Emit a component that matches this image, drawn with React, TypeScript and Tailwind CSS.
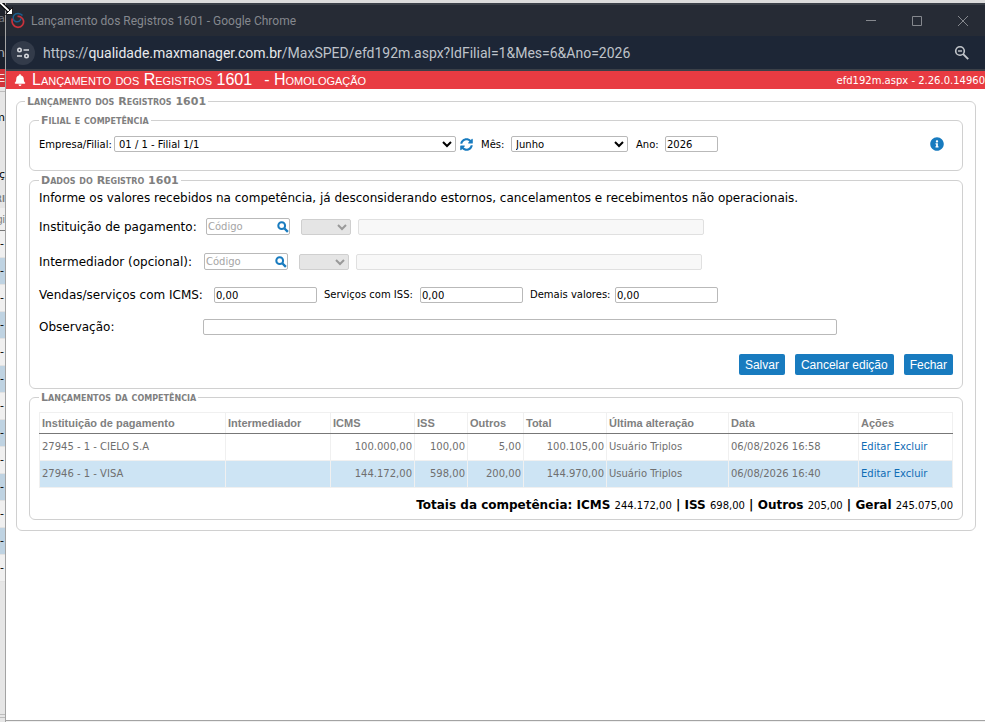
import React from 'react';
import { FaBell, FaInfoCircle, FaSyncAlt } from 'react-icons/fa';

const entries = [
  {
    institution: '27945 - 1 - CIELO S.A',
    icms: '100.000,00',
    iss: '100,00',
    others: '5,00',
    total: '100.105,00',
    user: 'Usuário Triplos',
    date: '06/08/2026 16:58',
  },
  {
    institution: '27946 - 1 - VISA',
    icms: '144.172,00',
    iss: '598,00',
    others: '200,00',
    total: '144.970,00',
    user: 'Usuário Triplos',
    date: '06/08/2026 16:40',
  },
];

const totals = [
  { label: 'ICMS', value: '244.172,00' },
  { label: 'ISS', value: '698,00' },
  { label: 'Outros', value: '205,00' },
  { label: 'Geral', value: '245.075,00' },
];

const backgroundRows = Array.from({ length: 13 }, (_, i) => i);

const controlClass = 'h-4 rounded-xs border border-[#b9b9b9] bg-white text-[10px] leading-3 text-black';
const inputClass = `${controlClass} px-px`;
const fieldsetClass = 'min-w-0 rounded-md border border-[#d0d0d0]';
const legendClass = 'px-0.5 text-[11px] font-bold leading-[13px] text-[#808080] [font-variant:small-caps]';
const buttonClass =
  "h-[21px] rounded-xs bg-[#187bbf] px-1.5 font-['Liberation_Sans',sans-serif] text-xs leading-4 text-white";

function FaviconIcon() {
  return (
    <svg width="14" height="17" viewBox="0 0 14 17" fill="none" aria-hidden="true">
      <path d="M11.5 3.5C9.5 1 5 .8 3 3.2 1.5 5.2 2 8.5 4.5 9.5c2.8 1 5.5-.8 5.5-3.2" stroke="#1c5f8d" strokeWidth="1.5" />
      <path d="M1.3 6.5C.2 10.5 2.5 15.3 7 15.3c4.200 0 6-3.800 5.500-6.600C12 6 9 4 6.500 4.500" stroke="#c8323c" strokeWidth="1.7" />
    </svg>
  );
}

function SiteSettingsIcon() {
  return (
    <svg width="14" height="14" viewBox="0 0 14 14" fill="none" stroke="#d5d7dc" strokeWidth="1.6" aria-hidden="true">
      <circle cx="3.5" cy="4" r="1.7" />
      <path d="M7.5 4H13M1 10h5" />
      <circle cx="10.5" cy="10" r="1.7" />
    </svg>
  );
}

function ZoomOutIcon() {
  return (
    <svg width="16" height="16" viewBox="0 0 16 16" fill="none" stroke="#c3c6cb" aria-hidden="true">
      <circle cx="6" cy="6" r="4.3" strokeWidth="1.6" />
      <path d="M4 6h4" strokeWidth="1.4" />
      <path d="M9.2 9.2l5 5" strokeWidth="1.9" />
    </svg>
  );
}

function SearchIcon() {
  return (
    <svg width="12" height="12" viewBox="0 0 12 12" fill="none" stroke="#187bbf" aria-hidden="true">
      <circle cx="4.7" cy="4.7" r="3.4" strokeWidth="2" />
      <path d="M7.5 7.5l3.4 3.4" strokeWidth="2.4" />
    </svg>
  );
}

function BackgroundWindow() {
  return (
    <div
      aria-hidden="true"
      className="flex w-1.5 shrink-0 flex-col overflow-hidden border-r border-[#a3a3a3] bg-[#e6e6e6] text-[11px] whitespace-nowrap text-black"
    >
      <div className="flex h-[33px] items-center justify-end bg-[#20242c] text-[#777a80]">ra</div>
      <div className="flex h-[33px] items-center justify-end bg-[#1a202c] text-[13px] text-[#aaaeb5]">n</div>
      <div className="flex h-[18px] items-center justify-end bg-[#d0343b] font-['Liberation_Sans',sans-serif] text-white">E</div>
      <div className="h-[5px] border-b border-[#bdbdbd]" />
      <div className="flex h-[52px] items-center justify-end">m</div>
      <div className="mt-[14px] flex h-[34px] items-center justify-end">ç</div>
      <div className="flex h-4 shrink-0 items-center justify-end text-[8px] font-bold text-[#808080]">RI</div>
      <div className="flex h-[23px] shrink-0 items-center justify-end border-b border-[#777777] bg-[#efefef] font-['Liberation_Sans',sans-serif] text-[#808080]">
        gi
      </div>
      {backgroundRows.map((row) => (
        <div
          key={row}
          className="flex h-[27px] shrink-0 items-center border-b border-[#e2e2e2] odd:bg-[#f0f0f0] even:bg-[#bfd3e2]"
        >
          -
        </div>
      ))}
      <div className="flex-1" />
      <div className="mb-1 h-1 border-y border-[#bdbdbd]" />
    </div>
  );
}

function TitleBar() {
  return (
    <header className="font-['Roboto',sans-serif]">
      <div className="flex h-[33px] items-center border-t-2 border-[#3b4048] bg-[#262b35] pr-[17px] pl-[5px]">
        <FaviconIcon />
        <h1 className="ml-1.5 text-xs text-[#85888e]">Lançamento dos Registros 1601 - Google Chrome</h1>
        <div className="ml-auto flex items-center gap-9 text-[#85888e]">
          <button type="button" aria-label="Minimizar" className="h-2.5 w-2.5">
            <svg width="10" height="10" viewBox="0 0 10 10" stroke="currentColor"><path d="M0 4.500h10" /></svg>
          </button>
          <button type="button" aria-label="Maximizar" className="h-2.5 w-2.5">
            <svg width="10" height="10" viewBox="0 0 10 10" fill="none" stroke="currentColor"><path d="M.5.5h9v9h-9z" /></svg>
          </button>
          <button type="button" aria-label="Fechar janela" className="h-2.5 w-2.5">
            <svg width="10" height="10" viewBox="0 0 10 10" stroke="currentColor"><path d="M0 0l10 10M10 0L0 10" /></svg>
          </button>
        </div>
      </div>
      <div className="flex h-[35px] items-center border-b-2 border-[#3b4048] bg-[#1d2636] pr-[15px] pl-[5px]">
        <button
          type="button"
          aria-label="Informações do site"
          className="flex h-6 w-6 items-center justify-center rounded-full bg-[#333b4a]"
        >
          <SiteSettingsIcon />
        </button>
        <p className="ml-2 text-sm text-[#bfc3ca]">
          https://<span className="text-[#e8eaed]">qualidade.maxmanager.com.br</span>
          /MaxSPED/efd192m.aspx?IdFilial=1&amp;Mes=6&amp;Ano=2026
        </p>
        <button type="button" aria-label="Zoom" className="ml-auto">
          <ZoomOutIcon />
        </button>
      </div>
    </header>
  );
}

type AccountRowProps = {
  id: string;
  label: string;
  labelClass: string;
};

function AccountRow({ id, label, labelClass }: AccountRowProps) {
  return (
    <div className="flex h-[17px] items-center">
      <label htmlFor={id} className={labelClass}>
        {label}
      </label>
      <div className="flex h-[17px] w-[84px] items-center rounded-xs border border-[#b9b9b9] bg-white">
        <input
          id={id}
          placeholder="Código"
          className="min-w-0 flex-1 px-px text-[10px] leading-3 outline-none placeholder:text-[#a5a5a5]"
        />
        <button type="button" aria-label={`Pesquisar ${label}`}>
          <SearchIcon />
        </button>
      </div>
      <select
        disabled
        aria-label={`Loja - ${label}`}
        className="ml-[11px] h-4 w-[50px] rounded-xs border border-[#cfcfcf] bg-[#e5e5e5] text-[10px] text-[#999999]"
      />
      <input
        disabled
        aria-label={`Nome - ${label}`}
        className="ml-[7px] h-4 w-[346px] rounded-xs border border-[#e0e0e0] bg-[#f8f8f8]"
      />
    </div>
  );
}

function EntriesTable() {
  return (
    <table className="w-full table-fixed border-collapse text-left text-[10px] leading-3 text-[#6f6f6f]">
      <colgroup>
        <col className="w-[186px]" />
        <col className="w-[105px]" />
        <col className="w-[84px]" />
        <col className="w-[53px]" />
        <col className="w-[56px]" />
        <col className="w-[83px]" />
        <col className="w-[122px]" />
        <col className="w-[130px]" />
        <col />
      </colgroup>
      <thead className="font-['Liberation_Sans',sans-serif] text-[11px] text-[#808080]">
        <tr className="h-[21px]">
          {['Instituição de pagamento', 'Intermediador', 'ICMS', 'ISS', 'Outros', 'Total', 'Última alteração', 'Data', 'Ações'].map(
            (title) => (
              <th key={title} className="border border-[#f0f0f0] border-b-[#777777] px-0.5 py-0 font-bold">
                {title}
              </th>
            ),
          )}
        </tr>
      </thead>
      <tbody className="[&_td]:border [&_td]:border-[#f0f0f0] [&_td]:px-0.5 [&_td]:py-0">
        {entries.map((entry) => (
          <tr key={entry.institution} className="h-[27px] even:bg-[#cde4f4]">
            <td>{entry.institution}</td>
            <td />
            <td className="text-right">{entry.icms}</td>
            <td className="text-right">{entry.iss}</td>
            <td className="text-right">{entry.others}</td>
            <td className="text-right">{entry.total}</td>
            <td>{entry.user}</td>
            <td>{entry.date}</td>
            <td className="text-[#0f6cb5]">
              <a href="#editar">Editar</a> <a href="#excluir">Excluir</a>
            </td>
          </tr>
        ))}
      </tbody>
    </table>
  );
}

export default function App() {
  return (
    <div className="relative flex min-h-screen flex-col overflow-hidden border-t-[3px] border-[#dcdcdc] bg-[#f0f0f0] font-['DejaVu_Sans',sans-serif]">
      <div className="flex flex-1">
        <BackgroundWindow />

        <div className="mb-px flex min-w-0 flex-1 flex-col border-b border-[#a3a3a3] bg-white text-black">
          <TitleBar />

          {/* Page title */}
          <div className="flex h-[18px] items-center bg-[#e83b42] pl-2 text-white">
            <FaBell size={12} />
            <h2 className="ml-1.5 flex gap-3 font-['Liberation_Sans',sans-serif] text-base leading-5 [font-variant:small-caps]">
              <span>Lançamento dos Registros 1601</span>
              <span>- Homologação</span>
            </h2>
            <span className="ml-auto text-[10px]">efd192m.aspx - 2.26.0.14960</span>
          </div>

          <main className="pt-1.5 pr-[9px] pl-2.5">
            <fieldset className={`${fieldsetClass} px-3 pb-2.5`}>
              <legend className={`${legendClass} -ml-1`}>Lançamento dos Registros 1601</legend>

              {/* Branch and period */}
              <fieldset className={`${fieldsetClass} mt-1.5 h-[57px] pr-[18px] pl-[9px]`}>
                <legend className={legendClass}>Filial e competência</legend>
                <div className="mt-[9px] flex h-4 items-center text-[10px]">
                  <label htmlFor="branch" className="w-[75px]">
                    Empresa/Filial:
                  </label>
                  <select id="branch" className={`${controlClass} w-[342px]`}>
                    <option>01 / 1 - Filial 1/1</option>
                  </select>
                  <button type="button" aria-label="Atualizar" className="ml-1 text-[#187bbf]">
                    <FaSyncAlt size={13} />
                  </button>
                  <label htmlFor="month" className="ml-2 w-[30px]">
                    Mês:
                  </label>
                  <select id="month" defaultValue="Junho" className={`${controlClass} w-[117px]`}>
                    <option>Junho</option>
                  </select>
                  <label htmlFor="year" className="ml-2 w-[29px]">
                    Ano:
                  </label>
                  <input id="year" defaultValue="2026" className={`${inputClass} w-[53px]`} />
                  <button type="button" aria-label="Ajuda" className="ml-auto text-[#187bbf]">
                    <FaInfoCircle size={14} />
                  </button>
                </div>
              </fieldset>

              {/* Record data */}
              <fieldset className={`${fieldsetClass} mt-[3px] h-[215px] px-[9px] text-xs`}>
                <legend className={legendClass}>Dados do Registro 1601</legend>
                <p className="mt-[3px] leading-4">
                  Informe os valores recebidos na competência, já desconsiderando estornos, cancelamentos e recebimentos não
                  operacionais.
                </p>
                <div className="mt-3 flex flex-col gap-[18px]">
                  <AccountRow id="institution" label="Instituição de pagamento:" labelClass="w-[167px]" />
                  <AccountRow id="intermediary" label="Intermediador (opcional):" labelClass="w-[165px]" />
                </div>
                <div className="mt-[17px] flex h-4 items-center">
                  <label htmlFor="icms" className="w-[175px]">
                    Vendas/serviços com ICMS:
                  </label>
                  <input id="icms" defaultValue="0,00" className={`${inputClass} w-[103px]`} />
                  <label htmlFor="iss" className="ml-[7px] w-24 text-[10px]">
                    Serviços com ISS:
                  </label>
                  <input id="iss" defaultValue="0,00" className={`${inputClass} w-[103px]`} />
                  <label htmlFor="others" className="ml-[7px] w-[85px] text-[10px]">
                    Demais valores:
                  </label>
                  <input id="others" defaultValue="0,00" className={`${inputClass} w-[103px]`} />
                </div>
                <div className="mt-4 flex h-4 items-center">
                  <label htmlFor="note" className="w-[164px]">
                    Observação:
                  </label>
                  <input id="note" className={`${inputClass} w-[634px]`} />
                </div>
                <div className="mt-[19px] flex justify-end gap-2.5">
                  <button type="button" className={buttonClass}>
                    Salvar
                  </button>
                  <button type="button" className={buttonClass}>
                    Cancelar edição
                  </button>
                  <button type="button" className={buttonClass}>
                    Fechar
                  </button>
                </div>
              </fieldset>

              {/* Entries of the period */}
              <fieldset className={`${fieldsetClass} mt-0.5 h-[129px] px-[9px]`}>
                <legend className={legendClass}>Lançamentos da competência</legend>
                <div className="mt-2">
                  <EntriesTable />
                </div>
                <p className="mt-[9px] text-right text-xs leading-4">
                  <b>Totais da competência: </b>
                  {totals.map((item, index) => (
                    <React.Fragment key={item.label}>
                      {index > 0 && <b> | </b>}
                      <b>{item.label} </b>
                      <span className="text-[10px]">{item.value}</span>
                    </React.Fragment>
                  ))}
                </p>
              </fieldset>
            </fieldset>
          </main>
        </div>
      </div>

      {/* Mouse pointer */}
      <svg
        className="pointer-events-none absolute -top-[3px] left-0"
        width="15"
        height="16"
        viewBox="0 0 15 16"
        aria-hidden="true"
      >
        <path d="M0 2.5L9 11" stroke="#000000" strokeWidth="4" />
        <path d="M0 2.5L9 11" stroke="#ffffff" strokeWidth="1.8" />
        <path d="M12.5 7.5V14.5H5.5z" fill="#ffffff" stroke="#000000" strokeWidth=".8" />
      </svg>
    </div>
  );
}
